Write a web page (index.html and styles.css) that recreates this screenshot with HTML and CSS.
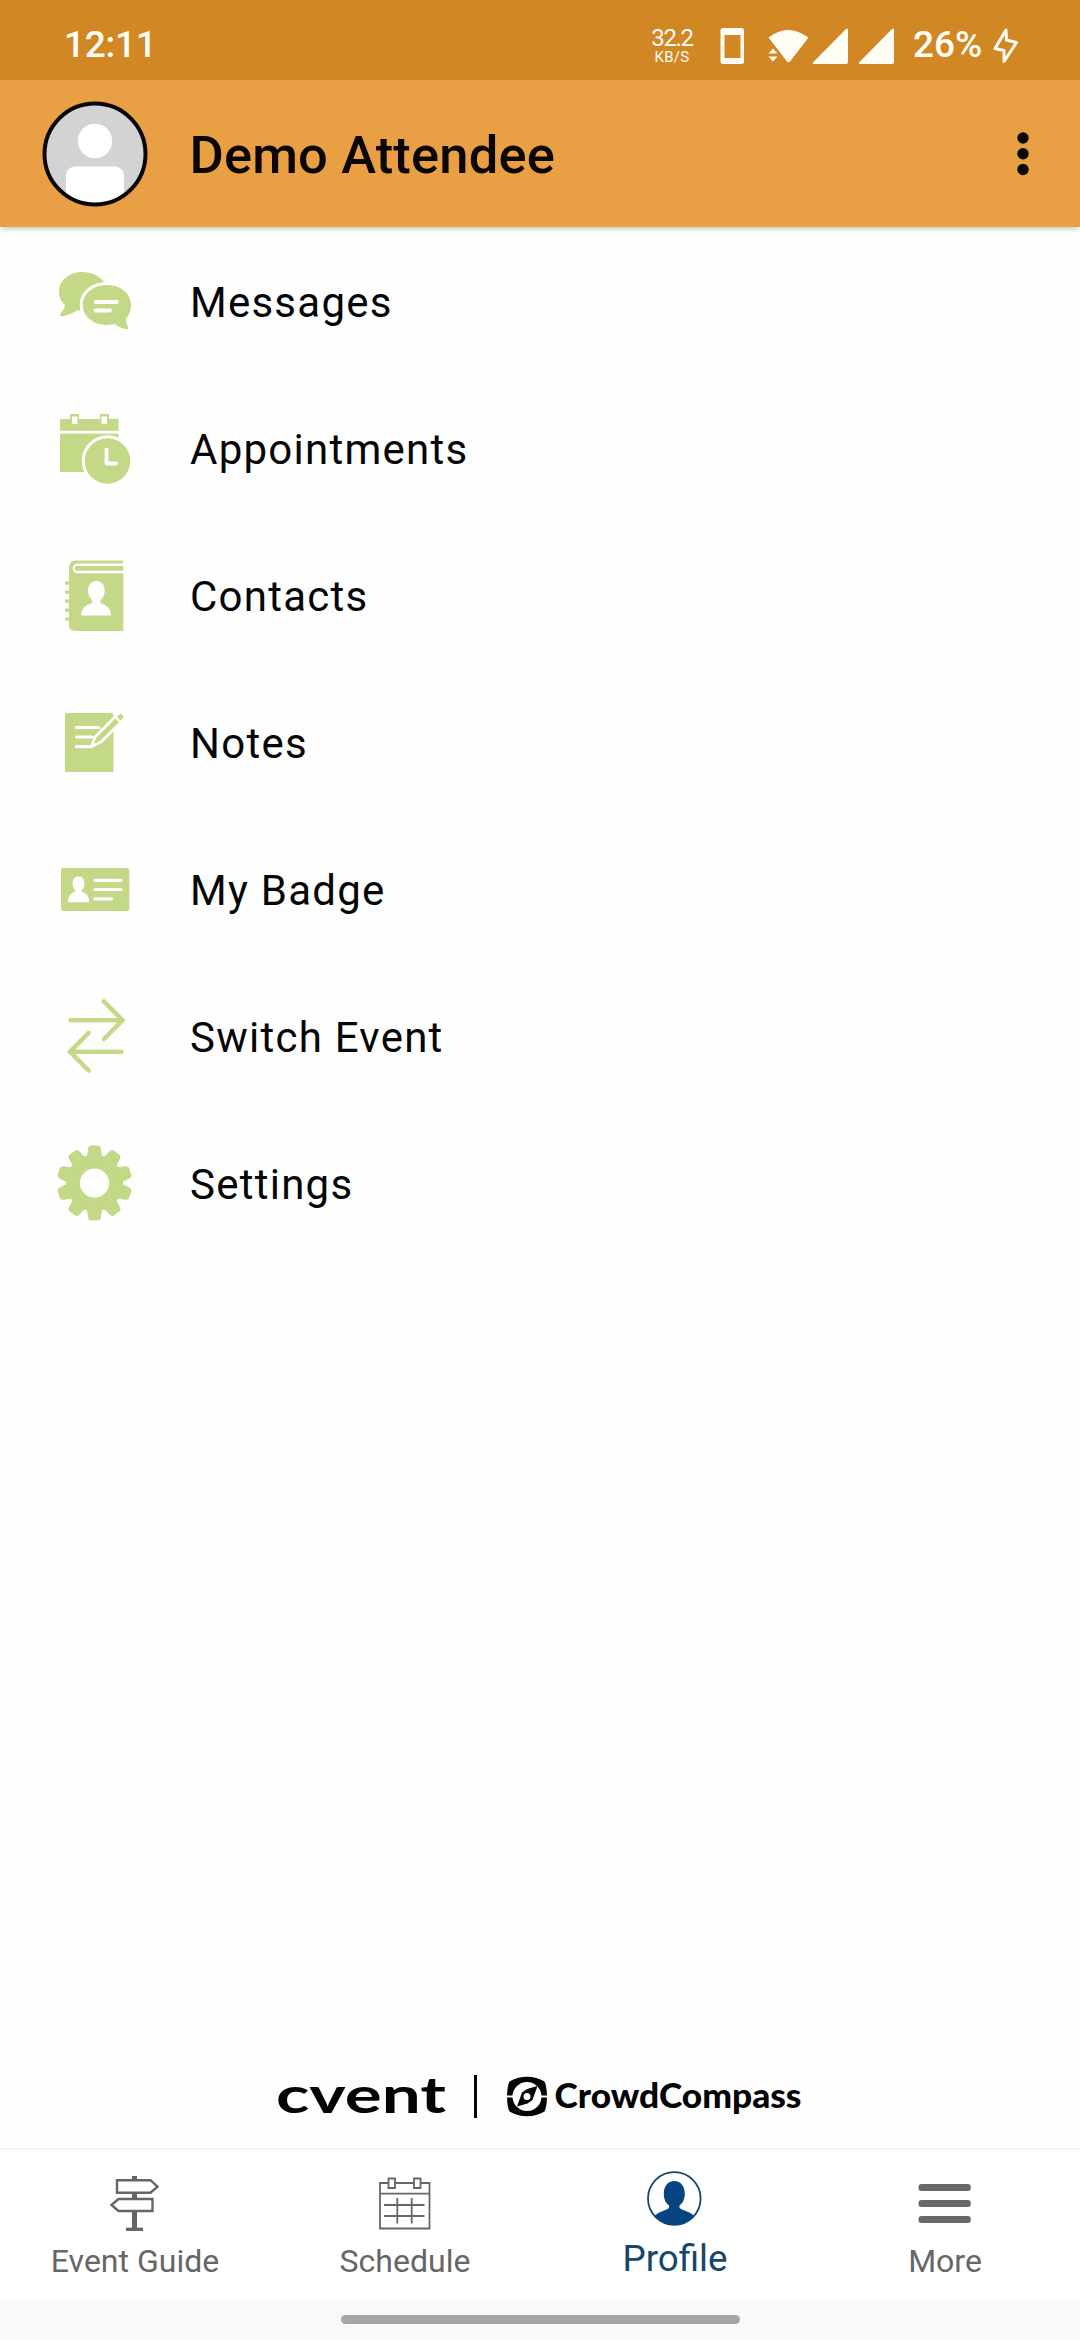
FILE: index.html
```html
<!DOCTYPE html>
<html lang="en">
<head>
<meta charset="utf-8">
<title>Profile</title>
<link rel="stylesheet" href="styles.css">
</head>
<body>
<div class="screen">
  <div class="status">
    <span class="time">12:11</span>
    <div class="speed"><span class="speed-num">32.2</span><span class="speed-unit">KB/S</span></div>
    <svg class="status-icons" width="176" height="40" viewBox="720 26 176 40" fill="#fffdf6">
      <path fill-rule="evenodd" d="M723 28h18.500a2.500 2.500 0 0 1 2.500 2.500v31a2.500 2.500 0 0 1-2.500 2.500h-18.500a2.500 2.500 0 0 1-2.500-2.500v-31a2.500 2.500 0 0 1 2.500-2.500zM724.500 35v23h16v-23z"/>
      <path d="M768.500 37.500Q788 22.500 808.500 37.500L790 61.500Q788.500 63 787 61.500z"/>
      <path d="M768.500 53.500l4.500-5 4.500 5zM768.500 56.500l4.500 5 4.500-5z"/>
      <path d="M848 30v32q0 2-2 2h-31.500q-3 0-1-2L846 29q2-1.500 2 1z"/>
      <path d="M894 30v32q0 2-2 2h-31.500q-3 0-1-2L892 29q2-1.500 2 1z"/>
    </svg>
    <span class="battery">26%</span>
    <svg class="bolt" width="28" height="38" viewBox="992 27 28 38" fill="none" stroke="#fffdf6" stroke-width="3" stroke-linejoin="round"><path d="M1006 30L995 48.500l9 2V61.500L1016.500 42.500l-10-2.500z"/></svg>
  </div>
  <header class="header">
    <svg class="avatar" width="106" height="106" viewBox="0 0 106 106">
      <defs><clipPath id="face"><circle cx="53" cy="53" r="50"/></clipPath></defs>
      <circle cx="53" cy="53" r="50" fill="#d3d3d4"/>
      <g clip-path="url(#face)" fill="#fff"><circle cx="53" cy="40" r="17.200"/><rect x="24" y="65.500" width="58" height="50" rx="9"/></g>
      <circle cx="53" cy="53" r="50.500" fill="none" stroke="#0b0606" stroke-width="4"/>
    </svg>
    <h1 class="title">Demo Attendee</h1>
    <svg class="kebab" width="12" height="44" viewBox="0 0 12 44" fill="#0b0606"><circle cx="6" cy="6" r="5.700"/><circle cx="6" cy="21.800" r="5.700"/><circle cx="6" cy="37.500" r="5.700"/></svg>
  </header>

  <main class="menu">
    <div class="item">
      <svg class="icon" viewBox="54 260 80 80">
        <path fill="#c3d987" d="M82.500 271c-13 0-23.500 8.500-23.500 19.500 0 6 2 10 6 13.500-.500 3-2 6-4.500 8.500-1 2 0 3 2 2.700 6-1 10-2.700 14-5.700h3l25-28c-5-6.500-13-10.500-22-10.500z"/>
        <path fill="#c3d987" stroke="#fff" stroke-width="6" paint-order="stroke" d="M107 284c-13.500 0-24.300 8.500-24.300 20s10.800 20 24.300 20c2.500 0 5-.300 7.500-.900 4 3 8 4.500 12.500 5.400 1.500 0 2.200-1 1.200-2.500-1.500-3-2.300-5-2.200-8 3.500-4 5-9 5-14 0-11.500-10.500-20-24-20z"/>
        <path stroke="#fff" stroke-width="3.800" stroke-linecap="round" d="M95.500 301H117M95.500 309.500H110"/>
      </svg>
      <span class="label">Messages</span>
    </div>
    <div class="item">
      <svg class="icon" viewBox="54 407 80 80">
        <path fill="#c3d987" d="M60 418h10v-5h9v5h21v-5h9v5h9.500v12H60zM60 432.500h58.500v38.500H60z"/>
        <path fill="#fff" d="M72 415.500h5.500v7.500H72zM101.500 415.500h5.500v7.500h-5.500zM60 429.700h60v2.500H60z"/>
        <circle cx="107.500" cy="460" r="22.800" fill="#c3d987" stroke="#fff" stroke-width="6" paint-order="stroke"/>
        <path d="M106.500 448.500v14H116" fill="none" stroke="#fff" stroke-width="3.800" stroke-linecap="round" stroke-linejoin="round"/>
      </svg>
      <span class="label">Appointments</span>
    </div>
    <div class="item">
      <svg class="icon" viewBox="54 554 80 80">
        <path fill="#c3d987" d="M75 559.500h48.300v70.500H75q-6-.500-6-5.500v-57q0-7.500 6-8z"/>
        <path fill="#fff" d="M124 562.500H76.500a5 5 0 0 0 0 9.700H124v-2.500H77a2.200 2.200 0 0 1 0-4.700H124z"/>
        <path d="M67 580.500v39" stroke="#c3d987" stroke-width="4" stroke-dasharray="3.200 5.800"/>
        <path fill="#fff" d="M96.500 580c-5 0-8.500 4-8.500 9.500 0 4 1.500 7.500 4.200 9.500v3c-6 2.500-11 4-11 12.500H111c0-8.500-5-10-10.500-12.500v-3c2.700-2 4.200-5.500 4.200-9.500 0-5.500-3.200-9.500-8.200-9.500z"/>
      </svg>
      <span class="label">Contacts</span>
    </div>
    <div class="item">
      <svg class="icon" viewBox="54 701 80 80">
        <rect x="65" y="712" width="48.500" height="59" rx="1.500" fill="#c3d987"/>
        <path stroke="#fff" stroke-width="3.200" stroke-linecap="round" d="M76.500 726.500H99M76.500 736H92M76.500 745.700H92"/>
        <path fill="#c3d987" stroke="#fff" stroke-width="2.600" stroke-linejoin="round" d="M91.500 745.500l3.500-9.500 23-23q3-2.500 5.500 0t0 5.500l-22.500 22.500z"/>
        <path stroke="#fff" stroke-width="2" d="M114.500 715l6.500 6.500"/>
      </svg>
      <span class="label">Notes</span>
    </div>
    <div class="item">
      <svg class="icon" viewBox="54 848 80 80">
        <rect x="61" y="867" width="68.300" height="43" rx="2" fill="#c3d987"/>
        <path fill="#fff" d="M78.500 875.500c-3.700 0-6 3-6 7.200 0 2.500 1 4.800 2.700 6.200v1.800c-4 1.600-7.200 3-7.200 10.500H89c0-7.500-3.200-8.900-7.200-10.500v-1.800c1.700-1.400 2.700-3.700 2.700-6.200 0-4.200-2.300-7.200-6-7.200z"/>
        <path stroke="#fff" stroke-width="3.200" stroke-linecap="round" d="M95 879.300H121M95 888.500H121M95 897.800H111.500"/>
      </svg>
      <span class="label">My Badge</span>
    </div>
    <div class="item">
      <svg class="icon" viewBox="54 995 80 80" fill="none" stroke="#c3d987" stroke-width="4.600" stroke-linecap="round">
        <path d="M70.500 1019.300H122M104 1000.500L122.500 1019.300 104 1038M121.500 1050.700H70M88.500 1032L70 1050.700 88.500 1069.500"/>
      </svg>
      <span class="label">Switch Event</span>
    </div>
    <div class="item">
      <svg class="icon" viewBox="-40.500 -40 80 80">
        <defs><path id="tooth" d="M-8.500-20L-6.500-34q.400-3.500 3-3.500h7q2.600 0 3 3.500L8.500-20z"/></defs>
        <g fill="#c3d987">
          <path fill-rule="evenodd" d="M0-28.500a28.500 28.500 0 1 0 0 57 28.500 28.500 0 1 0 0-57zM0-14.600a14.600 14.600 0 1 1 0 29.200 14.600 14.600 0 1 1 0-29.200z"/>
          <use href="#tooth"/><use href="#tooth" transform="rotate(36)"/><use href="#tooth" transform="rotate(72)"/><use href="#tooth" transform="rotate(108)"/><use href="#tooth" transform="rotate(144)"/><use href="#tooth" transform="rotate(180)"/><use href="#tooth" transform="rotate(216)"/><use href="#tooth" transform="rotate(252)"/><use href="#tooth" transform="rotate(288)"/><use href="#tooth" transform="rotate(324)"/>
        </g>
      </svg>
      <span class="label">Settings</span>
    </div>
  </main>

  <footer class="brand">
    <svg width="540" height="60" viewBox="270 2065 540 60" fill="#050505">
      <text class="cvent" x="276" y="2113" textLength="170" lengthAdjust="spacingAndGlyphs">cvent</text>
      <rect x="474" y="2075" width="3" height="43"/>
      <path d="M507 2095.500c.200-6 1-11 2.500-14 5-3 11-4.800 17.500-4.800s12.500 1.800 17.500 4.800c1.500 3 2.300 8 2.500 14zM507 2097.500c.200 6 1 11 2.500 14 5 3 11 4.800 17.500 4.800s12.500-1.800 17.500-4.800c1.500-3 2.300-8 2.500-14z"/>
      <circle cx="527" cy="2096.500" r="14.500" fill="#fff"/>
      <path fill-rule="evenodd" d="M537.500 2086l-5 14-5 3.500-10.500 3 5-14 5-3.500zM527 2093a3.500 3.500 0 1 0 0 7 3.500 3.500 0 1 0 0-7z"/>
      <text class="crowd" x="554.500" y="2108" textLength="247" lengthAdjust="spacingAndGlyphs">CrowdCompass</text>
    </svg>
  </footer>

  <nav class="tabs">
    <div class="tab">
      <svg class="tab-icon" viewBox="105 2168 60 64" fill="none" stroke="#666">
        <path stroke-width="5" d="M134.500 2176v4M134.500 2193v6M134.500 2211v19"/>
        <path stroke-width="3.300" d="M126 2229.300h17"/>
        <path stroke-width="2.400" d="M117 2180.200h33.500l7 6.500-7 6H117zM152.500 2199v12H118.500l-7-6 7-6z"/>
      </svg>
      <span class="tab-label">Event Guide</span>
    </div>
    <div class="tab">
      <svg class="tab-icon" viewBox="375 2168 60 64" fill="none" stroke="#666" stroke-width="1.800">
        <path d="M388 2183h-8v45.500h49.500V2183h-8.500M395 2183h19M380 2193.700h49.500M384 2205h40.500M384 2216h40.500M397.300 2198v25.500M411.700 2198v25.500"/>
        <path d="M388.500 2178.500h6.500v9.500h-6.500zM414 2178.500h6.500v9.500H414z"/>
      </svg>
      <span class="tab-label">Schedule</span>
    </div>
    <div class="tab active">
      <svg class="tab-icon" viewBox="645 2168 60 64">
        <defs><clipPath id="ring"><circle cx="674.300" cy="2198.500" r="26.500"/></clipPath></defs>
        <circle cx="674.300" cy="2198.500" r="26.300" fill="none" stroke="#17466b" stroke-width="1.800"/>
        <path clip-path="url(#ring)" fill="#06457f" d="M674.300 2181c-6.500 0-10.500 5.500-10.500 12.500 0 5 1.500 9.500 5.300 12v2c-1 3-12 3.500-15 9.500v12h40.500v-12c-3-6-14-6.500-15.200-9.500v-2c3.800-2.500 5.400-7 5.400-12 0-7-4-12.500-10.500-12.500z"/>
      </svg>
      <span class="tab-label">Profile</span>
    </div>
    <div class="tab">
      <svg class="tab-icon" viewBox="915 2168 60 64" fill="#696969">
        <rect x="918.500" y="2184" width="52.300" height="7" rx="3"/><rect x="918.500" y="2200" width="52.300" height="7" rx="3"/><rect x="918.500" y="2216" width="52.300" height="7" rx="3"/>
      </svg>
      <span class="tab-label">More</span>
    </div>
  </nav>
  <div class="gesture"><div class="pill"></div></div>
</div>
</body>
</html>
```
FILE: styles.css
```css
* { box-sizing: border-box; }
body { margin: 0; font-family: Roboto, "Liberation Sans", sans-serif; background: #fefefe; }
.screen { width: 1080px; height: 2340px; display: flex; flex-direction: column; overflow: hidden; }

.status { height: 80px; flex: none; background: #d18724; color: #fffdf6; display: flex; align-items: center; padding: 0 60px 0 64px; }
.time, .battery { font-size: 37px; line-height: 44px; font-weight: 500; padding-top: 10px; }
.time { letter-spacing: -.3px; }
.speed { width: 52px; margin-left: auto; margin-right: 22px; padding-top: 14px; display: flex; flex-direction: column; align-items: center; }
.speed-num { font-size: 24px; line-height: 21px; letter-spacing: -1.300px; }
.speed-unit { font-size: 15px; line-height: 17px; letter-spacing: .3px; }
.status-icons { margin-top: 12px; flex: none; }
.battery { margin-left: 17px; width: 79px; }
.bolt { margin-top: 12px; flex: none; }

.header { height: 147px; flex: none; background: #e9a044; display: flex; align-items: center; padding: 0 51px 0 41.500px; box-shadow: 0 4px 5px -2px rgba(0, 0, 0, .22); }
.avatar { flex: none; }
.title { margin: 0 auto 0 42px; padding-top: 3px; font-size: 52.500px; line-height: 62px; font-weight: 500; letter-spacing: .15px; color: #0b0606; }
.kebab { flex: none; }

.menu { flex: 1; }
.item { height: 147px; display: flex; align-items: center; padding-left: 54px; }
.icon { width: 80px; height: 80px; flex: none; }
.label { margin-left: 56px; padding-top: 4px; font-size: 42px; line-height: 50px; letter-spacing: 1.250px; color: #060606; }

.brand { flex: none; height: 83px; padding-left: 270px; }
.cvent { font: 700 49px Lato, sans-serif; }
.crowd { font: 900 33.500px Lato, sans-serif; }

.tabs { flex: none; height: 151px; display: grid; grid-template-columns: repeat(4, 1fr); background: #fff; border-top: 2px solid #f4f4f4; }
.tab { display: flex; flex-direction: column; align-items: center; padding-top: 18px; color: #666; }
.tab-icon { width: 60px; height: 64px; }
.tab-label { font-size: 32px; line-height: 38px; margin-top: 10px; }
.active { color: #17466b; }
.active .tab-label { font-size: 36.750px; margin-top: 8px; }

.gesture { flex: none; height: 41px; background: #f9f9f9; display: flex; justify-content: center; padding-top: 16px; }
.pill { width: 399px; height: 9px; border-radius: 5px; background: #a6a6a6; }
```
